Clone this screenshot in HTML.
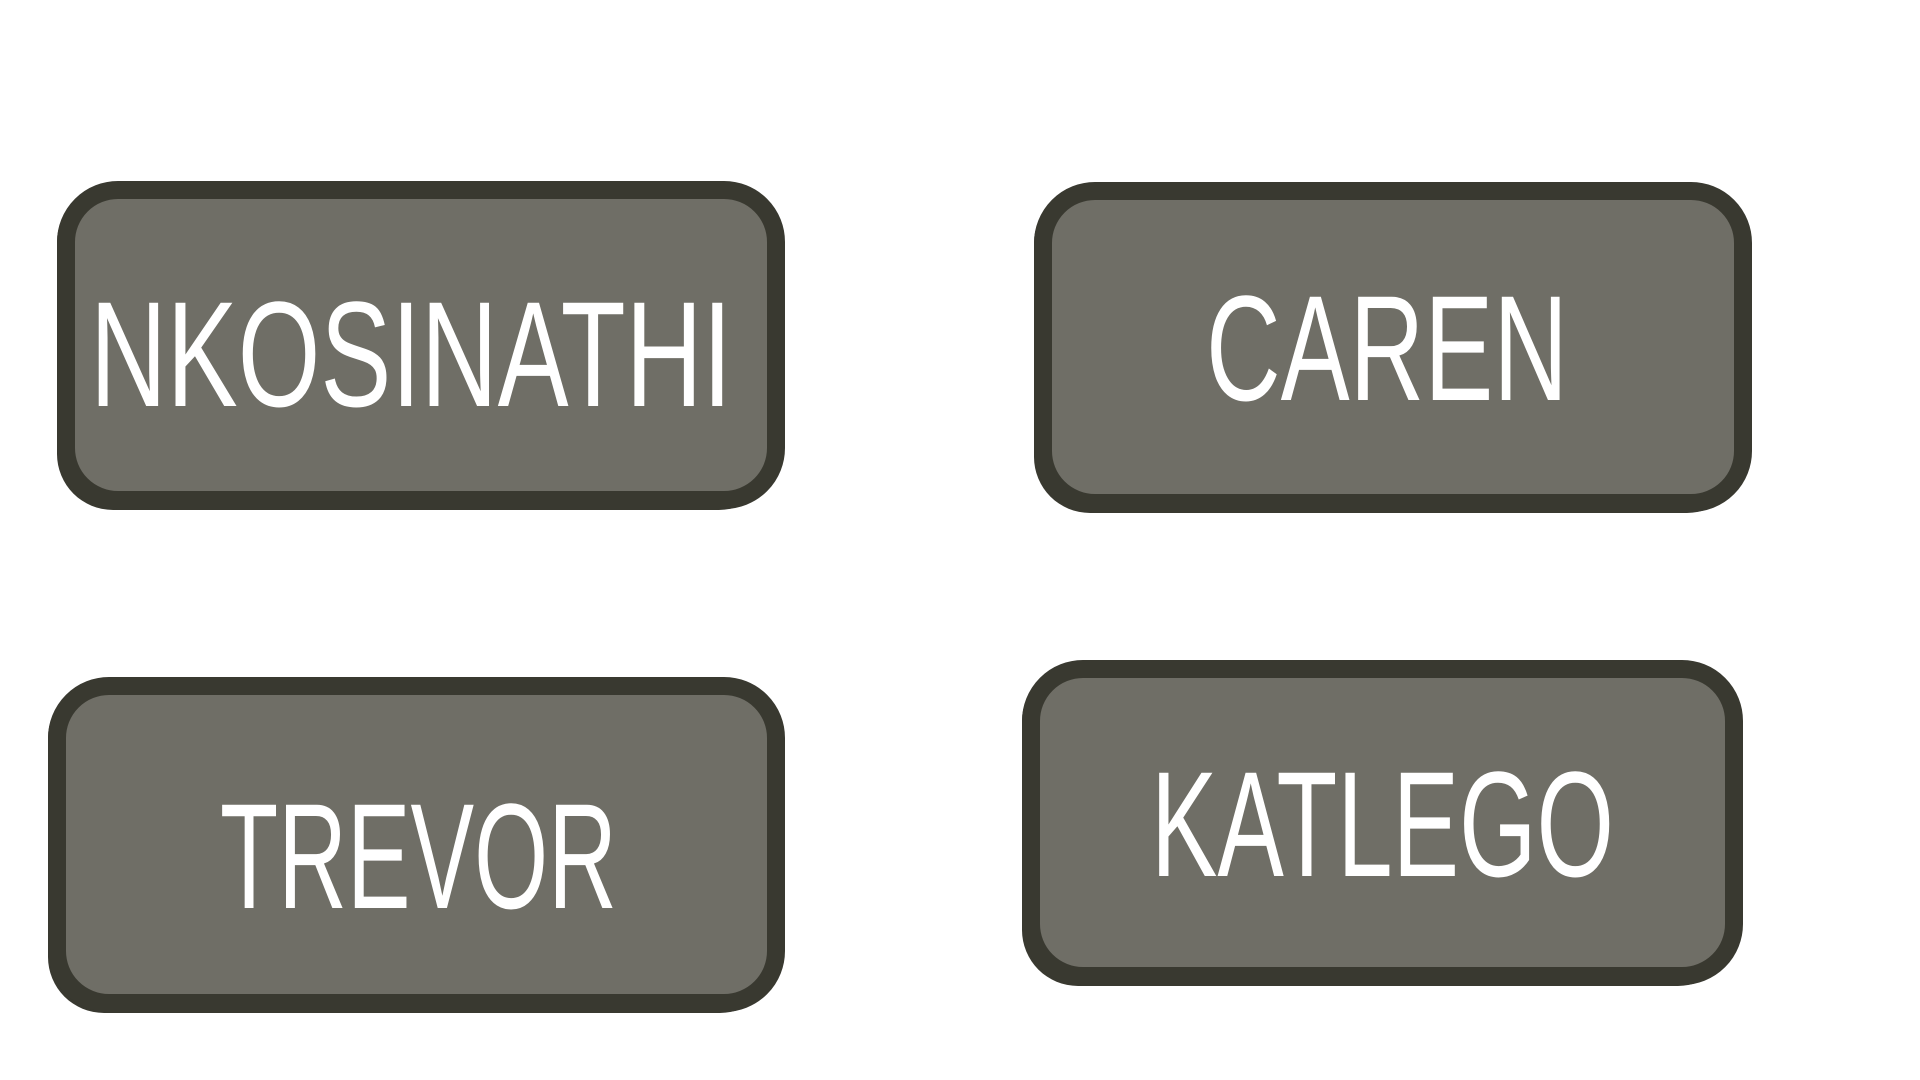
<!DOCTYPE html>
<html><head><meta charset="utf-8"><style>
html,body{margin:0;padding:0;background:#fff;width:1920px;height:1080px;overflow:hidden}
svg{display:block}
text{font-family:"Liberation Sans",sans-serif;fill:#fff;font-size:150px}
</style></head><body>
<svg width="1920" height="1080" viewBox="0 0 1920 1080">
<g fill="#393930">
<rect x="57" y="186" width="718" height="324" rx="56"/>
<rect x="1034" y="187" width="709" height="326" rx="56"/>
<rect x="48" y="682" width="728" height="331" rx="56"/>
<rect x="1022" y="665" width="712" height="321" rx="56"/>
</g>
<g fill="#6f6e66" stroke="#393930" stroke-width="18">
<rect x="66" y="190" width="710" height="310" rx="52"/>
<rect x="1043" y="191" width="700" height="312" rx="52"/>
<rect x="57" y="686" width="719" height="317" rx="52"/>
<rect x="1031" y="669" width="703" height="307" rx="52"/>
</g>
<text x="90" y="406" textLength="642" lengthAdjust="spacingAndGlyphs">NKOSINATHI</text>
<text x="1206" y="400" textLength="362" lengthAdjust="spacingAndGlyphs">CAREN</text>
<text x="220" y="908" textLength="397" lengthAdjust="spacingAndGlyphs">TREVOR</text>
<text x="1151" y="876" textLength="463" lengthAdjust="spacingAndGlyphs">KATLEGO</text>
</svg>
</body></html>
